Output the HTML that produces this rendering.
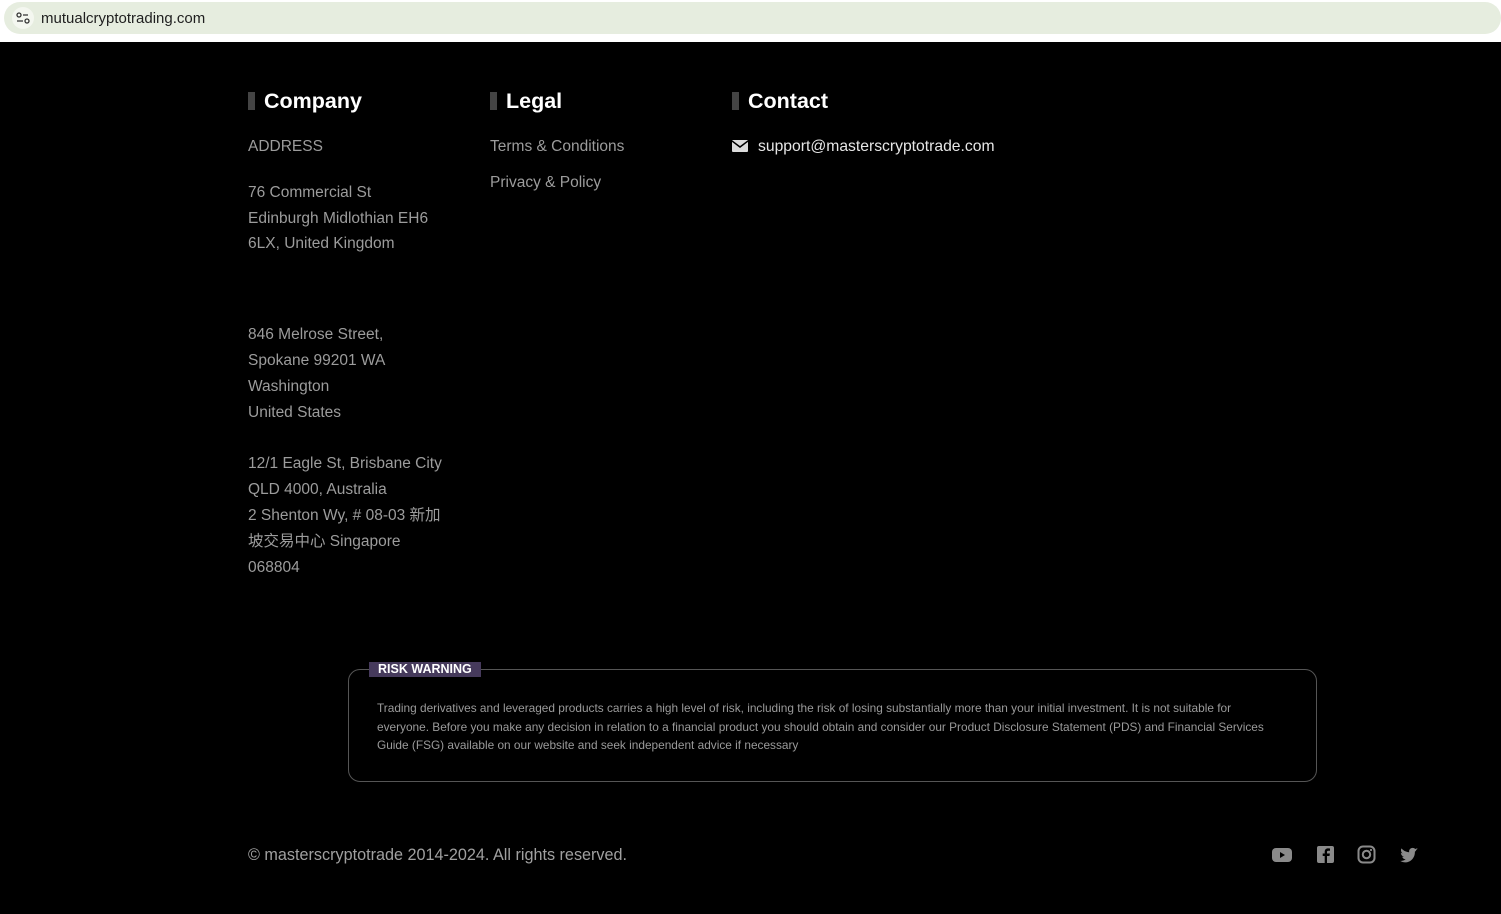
<!DOCTYPE html>
<html><head><meta charset="utf-8"><style>
body{margin:0;width:1501px;height:914px;background:#000;overflow:hidden;font-family:"Liberation Sans","Noto Sans CJK SC",sans-serif;position:relative}
.bar{position:absolute;left:0;top:0;width:1501px;height:42px;background:#fff}
.url{position:absolute;left:4px;top:2px;width:1497px;height:32px;background:#e6eddf;border-radius:16px}
.url span{position:absolute;left:37px;top:8px;font-size:15px;color:#1f1f1f}
.ic{position:absolute;left:8px;top:5px;width:22px;height:22px;border-radius:11px;background:#f4f7f0}
.a{position:absolute;color:#9c9c9c;font-size:15.5px;line-height:26px}
h3{position:absolute;margin:0;color:#fff;font-size:21.5px;font-weight:bold;top:89px}
h3:before{content:"";position:absolute;left:-16px;top:3px;width:7px;height:18px;background:#444}
.box{position:absolute;left:348px;top:669px;width:967px;height:111px;border:1px solid #555;border-radius:12px}
.tag{position:absolute;left:369px;top:662px;background:#463a5c;color:#fff;font-size:12.5px;font-weight:bold;padding:0 9px;line-height:15px}
.rt{position:absolute;left:377px;top:699px;white-space:nowrap;color:#9a9a9a;font-size:11.85px;line-height:18.5px}
</style></head><body>
<div class="bar"><div class="url"><div class="ic"><svg width="22" height="22"><circle cx="7" cy="8" r="2" fill="none" stroke="#333" stroke-width="1.3"/><path d="M11 8h5M5 14h6" stroke="#333" stroke-width="1.3"/><circle cx="15" cy="14" r="2" fill="none" stroke="#333" stroke-width="1.3"/></svg></div><span>mutualcryptotrading.com</span></div></div>
<h3 style="left:264px">Company</h3>
<h3 style="left:506px">Legal</h3>
<h3 style="left:748px">Contact</h3>
<div class="a" style="left:248px;top:134px">ADDRESS</div>
<div class="a" style="left:248px;top:180px;line-height:25.5px">76 Commercial St<br>Edinburgh Midlothian EH6<br>6LX, United Kingdom</div>
<div class="a" style="left:248px;top:322px">846 Melrose Street,<br>Spokane 99201 WA<br>Washington<br>United States</div>
<div class="a" style="left:248px;top:451px;width:205px">12/1 Eagle St, Brisbane City<br>QLD 4000, Australia<br>2 Shenton Wy, # 08-03 新加<br>坡交易中心 Singapore<br>068804</div>
<div class="a" style="left:490px;top:134px">Terms &amp; Conditions</div>
<div class="a" style="left:490px;top:170px">Privacy &amp; Policy</div>
<svg style="position:absolute;left:732px;top:140px" width="16" height="12"><rect width="16" height="12" rx="1" fill="#ddd"/><path d="M0 1l8 6 8-6" stroke="#000" stroke-width="1.5" fill="none"/></svg>
<div class="a" style="left:758px;top:134px;color:#e6e6e6;font-size:15.7px">support@masterscryptotrade.com</div>
<div class="box"></div><div class="tag">RISK WARNING</div>
<div class="rt">Trading derivatives and leveraged products carries a high level of risk, including the risk of losing substantially more than your initial investment. It is not suitable for<br>everyone. Before you make any decision in relation to a financial product you should obtain and consider our Product Disclosure Statement (PDS) and Financial Services<br>Guide (FSG) available on our website and seek independent advice if necessary</div>
<div class="a" style="left:248px;top:842px;color:#a0a0a0;font-size:16.2px">© masterscryptotrade 2014-2024. All rights reserved.</div>
<svg style="position:absolute;left:1272px;top:845px" width="150" height="20" fill="#8a8a8a">
<rect x="0" y="3" width="20" height="14" rx="4"/><path d="M8 7l5 3-5 3z" fill="#000"/>
<rect x="45" y="1" width="17" height="17" rx="2"/><path d="M55 18v-7h2.5l.4-2.5H55V7c0-.8.3-1.3 1.4-1.3H58V3.5c-.4 0-1.2-.1-2-.1-2 0-3.3 1.2-3.3 3.4v1.7h-2v2.5h2v7z" fill="#000"/>
<rect x="86.5" y="1.5" width="16" height="16" rx="4.5" fill="none" stroke="#8a8a8a" stroke-width="2"/><circle cx="94.5" cy="9.5" r="3.7" fill="none" stroke="#8a8a8a" stroke-width="2"/><circle cx="99" cy="5" r="1.1"/>
<path d="M146 4.5c-.7.3-1.4.5-2.1.6.8-.5 1.3-1.2 1.6-2-.7.4-1.5.7-2.3.9-1.5-1.6-4.2-1.4-5.5.4-.6.8-.7 1.9-.5 2.9-3-.2-5.8-1.6-7.7-3.9-1 1.7-.5 3.9 1.1 5-.6 0-1.2-.2-1.7-.5 0 1.8 1.3 3.4 3 3.7-.5.2-1.1.2-1.7.1.5 1.5 1.9 2.6 3.5 2.6-1.6 1.2-3.6 1.8-5.6 1.6 6.7 4.1 15-.8 14.8-9.2.7-.5 1.2-1.1 1.6-1.8z"/>
</svg>
</body></html>
